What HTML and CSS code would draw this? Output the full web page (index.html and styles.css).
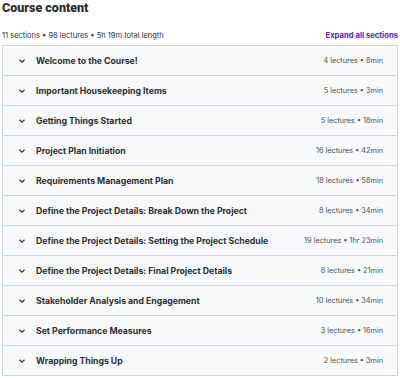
FILE: index.html
```html
<!DOCTYPE html>
<html>
  <head>
    <title>Course content</title>
    <link rel="stylesheet" href="styles.css">
  </head>
  <body>
    <h2 class="title">Course content</h2>
    <div class="summary">
      <span>11 sections &bull; 98 lectures &bull; 5h 19m total length</span>
      <button class="expand" type="button">Expand all sections</button>
    </div>
    <ul class="sections">
      <li class="section"><span class="chev"><svg viewBox="0 0 10 10"><path d="M2.5 3.8 L5 6.2 L7.5 3.8"/></svg></span><span class="name">Welcome to the Course!</span><span class="meta">4 lectures &bull; 8min</span></li>
      <li class="section"><span class="chev"><svg viewBox="0 0 10 10"><path d="M2.5 3.8 L5 6.2 L7.5 3.8"/></svg></span><span class="name">Important Housekeeping Items</span><span class="meta">5 lectures &bull; 3min</span></li>
      <li class="section"><span class="chev"><svg viewBox="0 0 10 10"><path d="M2.5 3.8 L5 6.2 L7.5 3.8"/></svg></span><span class="name">Getting Things Started</span><span class="meta">5 lectures &bull; 18min</span></li>
      <li class="section"><span class="chev"><svg viewBox="0 0 10 10"><path d="M2.5 3.8 L5 6.2 L7.5 3.8"/></svg></span><span class="name">Project Plan Initiation</span><span class="meta">16 lectures &bull; 42min</span></li>
      <li class="section"><span class="chev"><svg viewBox="0 0 10 10"><path d="M2.5 3.8 L5 6.2 L7.5 3.8"/></svg></span><span class="name">Requirements Management Plan</span><span class="meta">18 lectures &bull; 58min</span></li>
      <li class="section"><span class="chev"><svg viewBox="0 0 10 10"><path d="M2.5 3.8 L5 6.2 L7.5 3.8"/></svg></span><span class="name">Define the Project Details: Break Down the Project</span><span class="meta">8 lectures &bull; 34min</span></li>
      <li class="section"><span class="chev"><svg viewBox="0 0 10 10"><path d="M2.5 3.8 L5 6.2 L7.5 3.8"/></svg></span><span class="name">Define the Project Details: Setting the Project Schedule</span><span class="meta">19 lectures &bull; 1hr 23min</span></li>
      <li class="section"><span class="chev"><svg viewBox="0 0 10 10"><path d="M2.5 3.8 L5 6.2 L7.5 3.8"/></svg></span><span class="name">Define the Project Details: Final Project Details</span><span class="meta">8 lectures &bull; 21min</span></li>
      <li class="section"><span class="chev"><svg viewBox="0 0 10 10"><path d="M2.5 3.8 L5 6.2 L7.5 3.8"/></svg></span><span class="name">Stakeholder Analysis and Engagement</span><span class="meta">10 lectures &bull; 34min</span></li>
      <li class="section"><span class="chev"><svg viewBox="0 0 10 10"><path d="M2.5 3.8 L5 6.2 L7.5 3.8"/></svg></span><span class="name">Set Performance Measures</span><span class="meta">3 lectures &bull; 16min</span></li>
      <li class="section"><span class="chev"><svg viewBox="0 0 10 10"><path d="M2.5 3.8 L5 6.2 L7.5 3.8"/></svg></span><span class="name">Wrapping Things Up</span><span class="meta">2 lectures &bull; 3min</span></li>
    </ul>
  </body>
</html>
```

FILE: styles.css
```css
body {
  font-family: Inter, "Noto Sans", Arial, sans-serif;
  margin: 0;
  padding: 0 2px;
  background: #fff;
  color: #2d2f31;
}

.title {
  font-family: Roboto, Arial, sans-serif;
  font-size: 12.5px;
  font-weight: 900;
  margin: 0;
  padding-top: 1px;
  line-height: 14px;
}

.summary {
  display: flex;
  justify-content: space-between;
  align-items: center;
  margin-top: 13px;
  height: 14px;
  font-size: 7.5px;
  color: #2d2f31;
}

.expand {
  background: none;
  border: none;
  padding: 0;
  font-family: inherit;
  font-size: 7.7px;
  font-weight: 700;
  color: #5624d0;
  cursor: pointer;
}

.sections {
  list-style: none;
  margin: 3px 0 0;
  padding: 0;
  border: 1px solid #d1d7dc;
}

.section {
  display: flex;
  align-items: center;
  height: 29px;
  padding: 0 14px;
  background: #f7f9fa;
  border-bottom: 1px solid #d1d7dc;
  font-size: 8.7px;
}

.section:last-child {
  border-bottom: none;
}

.chev {
  display: flex;
  width: 10px;
  height: 10px;
  margin-right: 9px;
}

.chev svg {
  width: 10px;
  height: 10px;
  fill: none;
  stroke: #2d2f31;
  stroke-width: 1.2;
}

.name {
  flex: 1;
  font-weight: 700;
}

.meta {
  font-size: 7.3px;
  color: #4d5155;
}
```
